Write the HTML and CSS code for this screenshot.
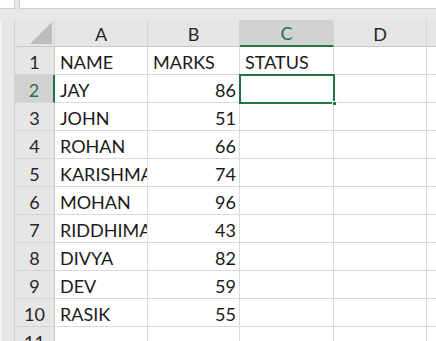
FILE: index.html
```html
<!DOCTYPE html>
<html>
<head>
<meta charset="utf-8">
<link rel="stylesheet" href="styles.css">
</head>
<body>
<div class="topbar">
  <div class="namebox"></div>
  <div class="formula"></div>
</div>
<div class="main">
  <div class="gutter"></div>
  <div class="sheet">
    <div class="corner"><div class="tri"></div></div>
    <div class="ch">A</div>
    <div class="ch">B</div>
    <div class="ch sel">C</div>
    <div class="ch">D</div>
    <div class="ch edge"></div>

    <div class="rh">1</div><div class="c">NAME</div><div class="c">MARKS</div><div class="c">STATUS</div><div class="c"></div><div class="c edge"></div>
    <div class="rh sel">2</div><div class="c">JAY</div><div class="c n">86</div><div class="c active"><span class="handle"></span></div><div class="c"></div><div class="c edge"></div>
    <div class="rh">3</div><div class="c">JOHN</div><div class="c n">51</div><div class="c"></div><div class="c"></div><div class="c edge"></div>
    <div class="rh">4</div><div class="c">ROHAN</div><div class="c n">66</div><div class="c"></div><div class="c"></div><div class="c edge"></div>
    <div class="rh">5</div><div class="c clip">KARISHMA</div><div class="c n">74</div><div class="c"></div><div class="c"></div><div class="c edge"></div>
    <div class="rh">6</div><div class="c">MOHAN</div><div class="c n">96</div><div class="c"></div><div class="c"></div><div class="c edge"></div>
    <div class="rh">7</div><div class="c clip">RIDDHIMA</div><div class="c n">43</div><div class="c"></div><div class="c"></div><div class="c edge"></div>
    <div class="rh">8</div><div class="c">DIVYA</div><div class="c n">82</div><div class="c"></div><div class="c"></div><div class="c edge"></div>
    <div class="rh">9</div><div class="c">DEV</div><div class="c n">59</div><div class="c"></div><div class="c"></div><div class="c edge"></div>
    <div class="rh">10</div><div class="c">RASIK</div><div class="c n">55</div><div class="c"></div><div class="c"></div><div class="c edge"></div>
    <div class="rh">11</div><div class="c"></div><div class="c"></div><div class="c"></div><div class="c"></div><div class="c edge"></div>
  </div>
</div>
</body>
</html>
```
FILE: styles.css
```css
* { box-sizing: border-box; }
html, body { margin: 0; padding: 0; }
body {
  width: 436px;
  height: 341px;
  overflow: hidden;
  background: #e8e8e8;
  font-family: Lato, "Open Sans", sans-serif;
  color: #1a1a1a;
}
.topbar {
  display: flex;
  gap: 4px;
  height: 20px;
  align-items: flex-start;
}
.namebox {
  width: 15px;
  height: 9px;
  background: #fff;
  border-right: 1px solid #cfcfcf;
  border-bottom: 1px solid #cfcfcf;
}
.formula {
  flex: 1;
  height: 9px;
  background: #fff;
  border-left: 1px solid #cfcfcf;
  border-bottom: 1px solid #cfcfcf;
}
.main {
  display: flex;
}
.gutter {
  width: 15px;
  height: 321px;
  background: #e6e6e6;
  border-left: 2px solid #f2f2f2;
  border-right: 1px solid #d0d0d0;
}
.sheet {
  display: grid;
  grid-template-columns: 40px 93px 92px 94px 93px 9px;
  grid-template-rows: 27px repeat(11, 28px);
  background: #fff;
}
.corner {
  background: #e6e6e6;
  border-right: 1px solid #d4d4d4;
  border-bottom: 1px solid #c8c8c8;
  position: relative;
}
.tri {
  position: absolute;
  right: 2px;
  bottom: 2px;
  width: 0;
  height: 0;
  border-left: 22px solid transparent;
  border-bottom: 22px solid #bdbdbd;
}
.ch {
  background: #e6e6e6;
  border-right: 1px solid #d4d4d4;
  border-bottom: 1px solid #c8c8c8;
  display: flex;
  align-items: center;
  justify-content: center;
  font-size: 18px;
  color: #262626;
  padding-top: 1px;
}
.ch.sel {
  background: #d2d2d2;
  color: #217346;
  border-bottom: 2px solid #217346;
}
.ch.edge { border-right: none; }
.rh {
  background: #e6e6e6;
  border-right: 1px solid #c8c8c8;
  border-bottom: 1px solid #d4d4d4;
  display: flex;
  align-items: center;
  justify-content: center;
  font-size: 18px;
  color: #262626;
  padding-top: 2px;
}
.rh.sel {
  background: #d2d2d2;
  color: #217346;
  border-right: 2px solid #217346;
}
.c {
  border-right: 1px solid #dadada;
  border-bottom: 1px solid #dadada;
  font-size: 18px;
  line-height: 28px;
  padding: 1px 3px 0 5px;
  white-space: nowrap;
  overflow: visible;
  position: relative;
}
.c.clip { overflow: hidden; text-overflow: clip; border-right-color: #e4e4e4; }
.c.n { text-align: right; }
.c.edge { border-right: none; }
.c.active {
  outline: 2px solid #217346;
  outline-offset: -1px;
  z-index: 1;
}
.handle {
  position: absolute;
  right: -4px;
  bottom: -4px;
  width: 5px;
  height: 5px;
  background: #217346;
  border: 1px solid #fff;
}
```
